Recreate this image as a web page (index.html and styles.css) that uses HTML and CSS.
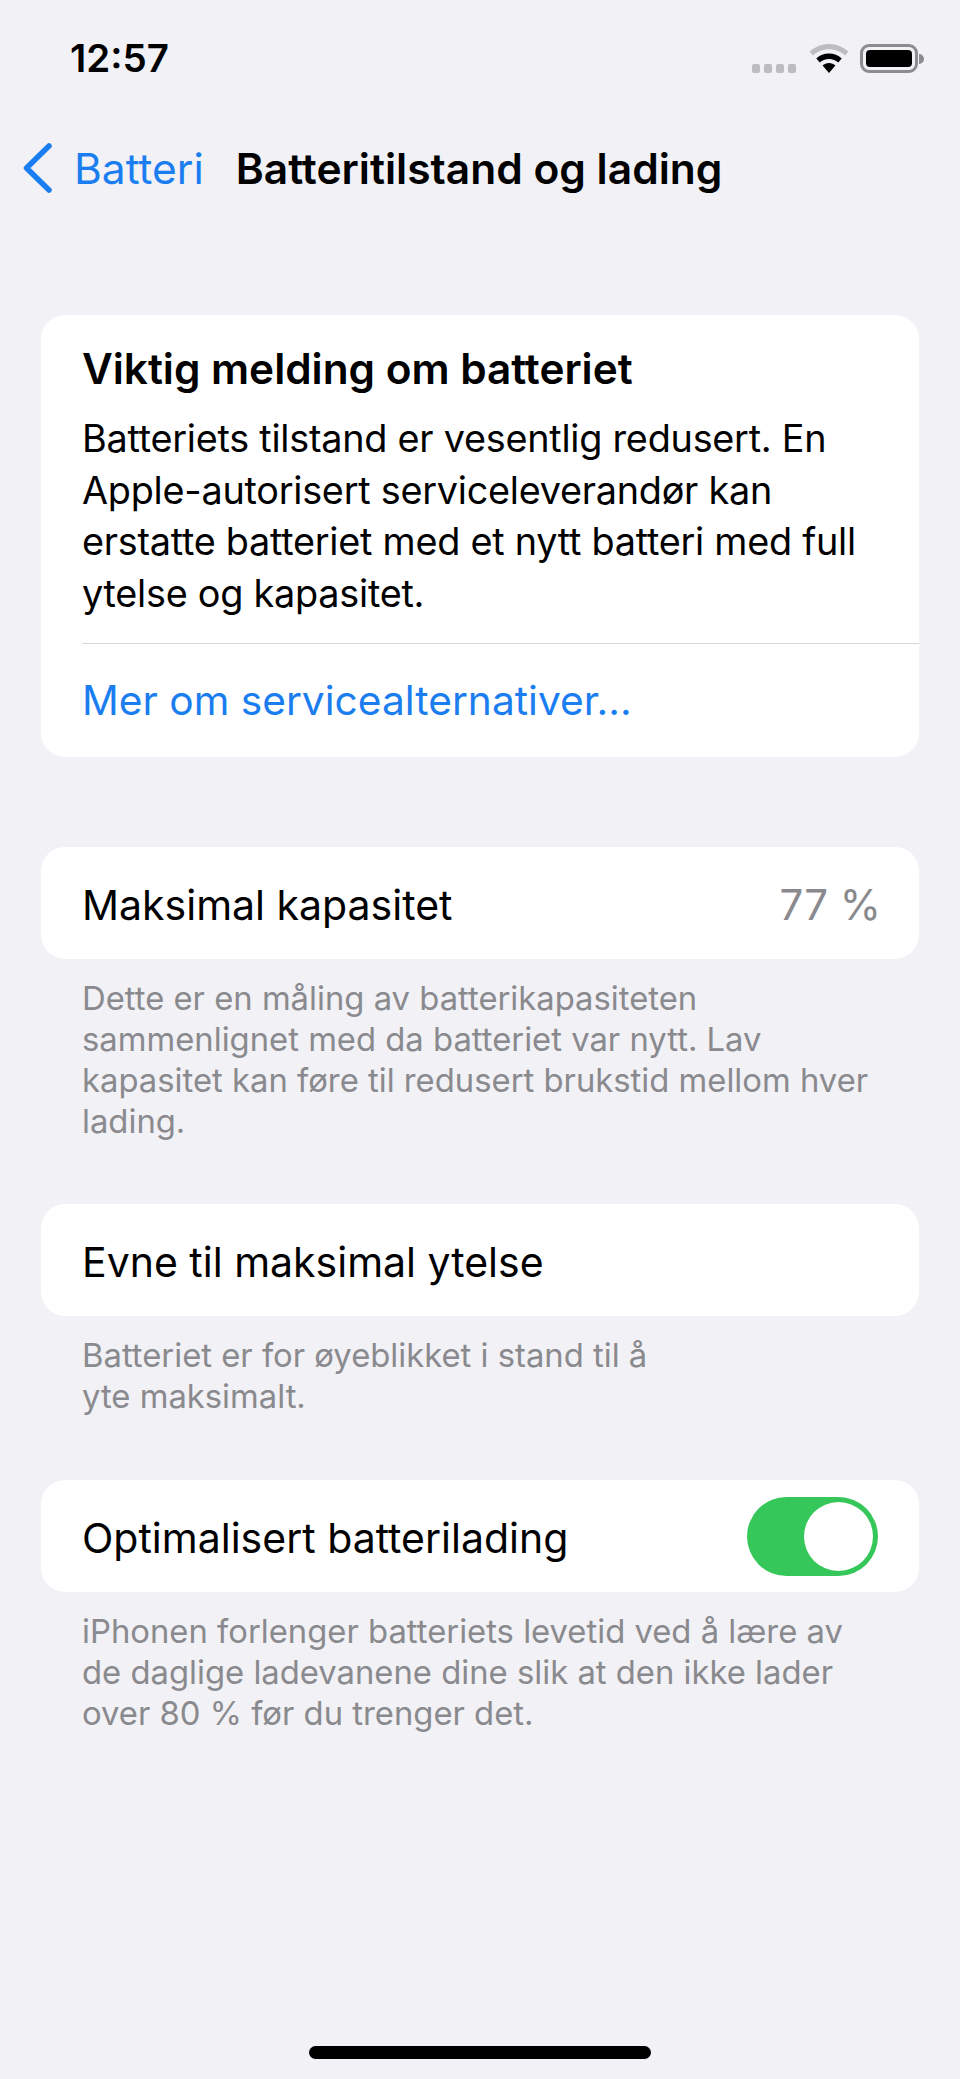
FILE: index.html
```html
<!DOCTYPE html>
<html>
<head>
    <title>Batteritilstand og lading</title>
    <link rel="stylesheet" href="styles.css">
</head>
<body>
    <div class="page">
        <div class="status-bar">
            <span class="time">12:57</span>
            <div class="status-icons">
                <div class="signal">
                    <span></span><span></span><span></span><span></span>
                </div>
                <svg class="wifi" width="40" height="29" viewBox="0 0 40 29">
                    <path d="M20 0C12.5 0 5.7 3 .6 7.6l3.3 3.8C8.1 7.6 13.8 5.2 20 5.2s11.900 2.400 16.100 6.200l3.300-3.800C34.300 3 27.500 0 20 0z" fill="#bdbdc0"/>
                    <path d="M20 9.500c-4.900 0-9.300 1.900-12.700 4.900l3.500 4c2.400-2.200 5.600-3.500 9.200-3.500s6.800 1.300 9.200 3.500l3.500-4c-3.400-3-7.800-4.900-12.700-4.900z" fill="#000"/>
                    <path d="M20 19c-2.500 0-4.700.9-6.400 2.400L20 29l6.400-7.600C24.700 19.900 22.500 19 20 19z" fill="#000"/>
                </svg>
                <div class="battery">
                    <div class="battery-body"><div class="battery-level"></div></div>
                    <div class="battery-nub"></div>
                </div>
            </div>
        </div>

        <div class="nav-bar">
            <a class="back">
                <svg width="30" height="50" viewBox="0 0 30 50">
                    <path d="M27 3L4.500 25 27 47" fill="none" stroke="#1a7ef0" stroke-width="5.500" stroke-linecap="round" stroke-linejoin="round"/>
                </svg>
                <span>Batteri</span>
            </a>
            <h1 class="nav-title">Batteritilstand og lading</h1>
        </div>

        <div class="content">
            <div class="card message-card">
                <div class="message-text">
                    <h2>Viktig melding om batteriet</h2>
                    <p>Batteriets tilstand er vesentlig redusert. En<br>Apple-autorisert serviceleverandør kan<br>erstatte batteriet med et nytt batteri med full<br>ytelse og kapasitet.</p>
                </div>
                <a class="link-row">Mer om servicealternativer...</a>
            </div>

            <div class="card row">
                <span>Maksimal kapasitet</span>
                <span class="value">77 %</span>
            </div>
            <p class="note">Dette er en måling av batterikapasiteten<br>sammenlignet med da batteriet var nytt. Lav<br>kapasitet kan føre til redusert brukstid mellom hver<br>lading.</p>

            <div class="card row">
                <span>Evne til maksimal ytelse</span>
            </div>
            <p class="note note-short">Batteriet er for øyeblikket i stand til å<br>yte maksimalt.</p>

            <div class="card row">
                <span>Optimalisert batterilading</span>
                <div class="toggle"><div class="knob"></div></div>
            </div>
            <p class="note">iPhonen forlenger batteriets levetid ved å lære av<br>de daglige ladevanene dine slik at den ikke lader<br>over 80 % før du trenger det.</p>
        </div>

        <div class="home-indicator"></div>
    </div>
</body>
</html>
```

FILE: styles.css
```css
* {
    box-sizing: border-box;
}

body {
    margin: 0;
    background-color: #f1f1f6;
    font-family: Inter, "Liberation Sans", sans-serif;
    color: #000;
}

.page {
    width: 960px;
    height: 2079px;
    display: flex;
    flex-direction: column;
    overflow: hidden;
}

/* status bar */
.status-bar {
    height: 116px;
    padding: 38px 36px 0 70px;
    display: flex;
    justify-content: space-between;
    align-items: flex-start;
}

.time {
    font-size: 38.500px;
    line-height: 40px;
    font-weight: 600;
}

.status-icons {
    margin-top: 6px;
    display: flex;
    align-items: flex-end;
}

.signal {
    display: flex;
    gap: 4px;
    margin-right: 13px;
}

.signal span {
    width: 8px;
    height: 9px;
    border-radius: 2px;
    background-color: #bdbdc1;
}

.wifi {
    display: block;
    margin-right: 11px;
}

.battery {
    display: flex;
    align-items: center;
}

.battery-body {
    width: 58px;
    height: 29px;
    padding: 3px;
    border: 3px solid #8d8d8f;
    border-radius: 9px;
}

.battery-level {
    height: 100%;
    background-color: #000;
    border-radius: 4px;
}

.battery-nub {
    width: 5px;
    height: 10px;
    margin-left: 1px;
    background-color: #8d8d8f;
    border-radius: 0 5px 5px 0;
}

/* nav */
.nav-bar {
    height: 104px;
    padding-left: 22px;
    display: flex;
    align-items: center;
}

.back {
    display: flex;
    align-items: center;
    color: #1a7ef0;
    font-size: 42.500px;
    margin-right: 32px;
}

.back svg {
    margin-right: 22px;
}

.nav-title {
    margin: 0;
    font-size: 42.500px;
    font-weight: 600;
}

/* cards */
.content {
    padding: 95px 41px 0;
}

.card {
    background-color: #fff;
    border-radius: 24px;
    font-size: 41px;
}

.message-card {
    height: 442px;
    padding-left: 41px;
    margin-bottom: 90px;
}

.message-text {
    height: 329px;
    padding-top: 29px;
    border-bottom: 1.500px solid #d6d6d8;
}

.message-text h2 {
    margin: 0;
    font-size: 42.300px;
    line-height: 50px;
    font-weight: 600;
}

.message-text p {
    margin: 19px 0 0;
    font-size: 37.800px;
    line-height: 51.500px;
    letter-spacing: -0.25px;
}

.link-row {
    display: block;
    padding-top: 32px;
    color: #1a7ef0;
    font-size: 40.700px;
    line-height: 50px;
}

.row {
    height: 112px;
    padding: 0 41px;
    display: flex;
    justify-content: space-between;
    align-items: center;
}

.row span {
    padding-top: 3px;
}

.row .value {
    color: #8a8a8e;
    font-size: 42px;
    margin-right: -3px;
}

.note {
    margin: 19px 0 62px;
    padding-left: 41px;
    font-size: 32.800px;
    line-height: 41px;
    color: #8a8a8e;
}

.note-short {
    margin-bottom: 63px;
}

.toggle {
    width: 131px;
    height: 79px;
    padding: 5px;
    border-radius: 40px;
    background-color: #35c759;
    display: flex;
    justify-content: flex-end;
}

.knob {
    width: 69px;
    height: 69px;
    border-radius: 50%;
    background-color: #fff;
}

.home-indicator {
    width: 342px;
    height: 13px;
    margin: auto auto 20px;
    background-color: #000;
    border-radius: 7px;
}
```
